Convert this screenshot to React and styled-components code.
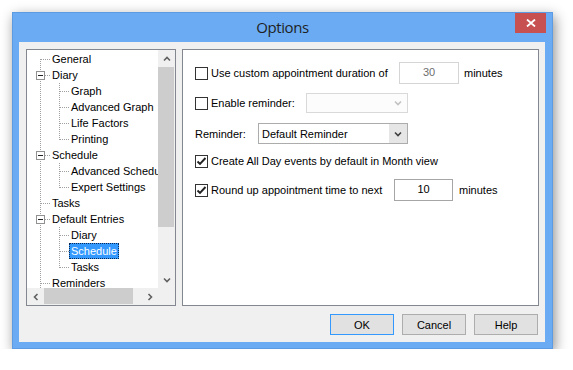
import styled, { createGlobalStyle } from "styled-components";

const GlobalStyle = createGlobalStyle`
  body {
    margin: 0;
    background: #ffffff;
    font-family: "Liberation Sans", Arial, sans-serif;
    font-size: 11px;
    color: #000;
  }
`;

const tree = [
  { label: "General", level: 0, first: true },
  { label: "Diary", level: 0, box: true },
  { label: "Graph", level: 1 },
  { label: "Advanced Graph", level: 1 },
  { label: "Life Factors", level: 1 },
  { label: "Printing", level: 1, last: true },
  { label: "Schedule", level: 0, box: true },
  { label: "Advanced Schedule", level: 1 },
  { label: "Expert Settings", level: 1, last: true },
  { label: "Tasks", level: 0 },
  { label: "Default Entries", level: 0, box: true },
  { label: "Diary", level: 1 },
  { label: "Schedule", level: 1, selected: true },
  { label: "Tasks", level: 1, last: true },
  { label: "Reminders", level: 0 },
];

function Connector({ item }) {
  const dot = { stroke: "#a0a0a0", strokeDasharray: "1 1", shapeRendering: "crispEdges" };
  if (item.level === 0) {
    return (
      <svg width="23" height="16">
        <line x1="13.5" y1={item.first ? 8 : 0} x2="13.5" y2="16" style={dot} />
        <line x1="14" y1="8.5" x2="23" y2="8.5" style={dot} />
        {item.box && (
          <>
            <rect x="9.5" y="4.5" width="8" height="8" fill="#fff" stroke="#919191" shapeRendering="crispEdges" />
            <line x1="11" y1="8.5" x2="16" y2="8.5" stroke="#222" shapeRendering="crispEdges" />
          </>
        )}
      </svg>
    );
  }
  return (
    <svg width="42" height="16">
      <line x1="13.5" y1="0" x2="13.5" y2="16" style={dot} />
      <line x1="32.5" y1="0" x2="32.5" y2={item.last ? 9 : 16} style={dot} />
      <line x1="33" y1="8.5" x2="42" y2="8.5" style={dot} />
    </svg>
  );
}

function Chevron({ dir = "down", color = "#404040" }) {
  const paths = {
    down: "M1 1.5 L4 4.5 L7 1.5",
    up: "M1 4.5 L4 1.5 L7 4.5",
    left: "M4.5 1 L1.5 4 L4.5 7",
    right: "M1.5 1 L4.5 4 L1.5 7",
  };
  const vertical = dir === "down" || dir === "up";
  return (
    <svg width={vertical ? 8 : 6} height={vertical ? 6 : 8}>
      <path d={paths[dir]} fill="none" stroke={color} strokeWidth="1.6" />
    </svg>
  );
}

function Check({ checked }) {
  return (
    <Box>
      {checked && (
        <svg width="11" height="11">
          <path d="M1.5 5.5 L4 8 L9.5 2" fill="none" stroke="#222" strokeWidth="1.9" />
        </svg>
      )}
    </Box>
  );
}

export default function App() {
  return (
    <>
      <GlobalStyle />
      <Window>
        <TitleBar>
          <span />
          <Title>Options</Title>
          <Close>
            <svg width="10" height="8">
              <path d="M1 0.5 L9 7.5 M9 0.5 L1 7.5" stroke="#fff" strokeWidth="1.8" />
            </svg>
          </Close>
        </TitleBar>
        <Client>
          <Panels>
            <TreePanel>
              <TreeBody>
                {tree.map((item, i) => (
                  <TreeRow key={i}>
                    <Connector item={item} />
                    <TreeLabel $selected={item.selected}>{item.label}</TreeLabel>
                  </TreeRow>
                ))}
              </TreeBody>
              <VScroll>
                <ArrowBox><Chevron dir="up" color="#606060" /></ArrowBox>
                <VThumb />
                <Track />
                <ArrowBox><Chevron dir="down" color="#606060" /></ArrowBox>
              </VScroll>
              <HScroll>
                <ArrowBox><Chevron dir="left" color="#606060" /></ArrowBox>
                <HThumb />
                <Track />
                <ArrowBox><Chevron dir="right" color="#606060" /></ArrowBox>
              </HScroll>
              <Corner />
            </TreePanel>

            <SettingsPanel>
              <Row $h={22}>
                <Check />
                <Label $w={188}>Use custom appointment duration of</Label>
                <NumberBox $w={60} $disabled>30</NumberBox>
                <Unit>minutes</Unit>
              </Row>
              <Row $h={20} $mt={9}>
                <Check />
                <Label $w={95}>Enable reminder:</Label>
                <Combo $w={102} $disabled>
                  <ComboText />
                  <ComboArrow $disabled><Chevron color="#c2c2c2" /></ComboArrow>
                </Combo>
              </Row>
              <Row $h={21} $mt={10}>
                <Label $w={63} $plain>Reminder:</Label>
                <Combo $w={150}>
                  <ComboText>Default Reminder</ComboText>
                  <ComboArrow><Chevron /></ComboArrow>
                </Combo>
              </Row>
              <Row $h={22} $mt={6}>
                <Check checked />
                <Label>Create All Day events by default in Month view</Label>
              </Row>
              <Row $h={22} $mt={7}>
                <Check checked />
                <Label $w={183}>Round up appointment time to next</Label>
                <NumberBox $w={59}>10</NumberBox>
                <Unit $gap={6}>minutes</Unit>
              </Row>
            </SettingsPanel>
          </Panels>

          <Buttons>
            <Button $default>OK</Button>
            <Button>Cancel</Button>
            <Button>Help</Button>
          </Buttons>
        </Client>
      </Window>
    </>
  );
}

const Window = styled.div`
  box-sizing: border-box;
  width: 541px;
  height: 337px;
  margin: 12px 0 0 12px;

  display: flex;
  flex-direction: column;

  background: #6aabf3;
  border: 1px solid #5c9be2;
  box-shadow: 2px 4px 12px rgba(0, 0, 0, 0.45);
  padding: 0 7px 6px 6px;
`;

const TitleBar = styled.div`
  height: 29px;
  display: grid;
  grid-template-columns: 1fr auto 1fr;
  margin: 0 -1px 0 0;
`;

const Title = styled.div`
  align-self: center;
  margin-top: -1px;
  font-family: "Open Sans", "Noto Sans", sans-serif;
  font-size: 15px;
  letter-spacing: -0.4px;
  color: #1f1f1f;
`;

const Close = styled.div`
  justify-self: end;
  align-self: start;
  width: 31px;
  height: 20px;
  background: #c75050;

  display: flex;
  align-items: center;
  justify-content: center;
`;

const Client = styled.div`
  box-sizing: border-box;
  width: 526px;
  height: 300px;
  background: #f0f0f0;
  padding: 7px 6px 7px 7px;

  display: flex;
  flex-direction: column;
`;

const Panels = styled.div`
  height: 257px;
  display: flex;
  gap: 6px;
`;

const TreePanel = styled.div`
  box-sizing: border-box;
  width: 150px;
  border: 1px solid #828790;
  background: #fff;

  display: grid;
  grid-template-columns: 1fr 17px;
  grid-template-rows: 1fr 17px;
  overflow: hidden;
`;

const TreeBody = styled.div`
  padding-top: 1px;
  overflow: hidden;
  white-space: nowrap;
`;

const TreeRow = styled.div`
  height: 16px;
  display: flex;
  align-items: center;

  svg {
    flex: none;
  }
`;

const TreeLabel = styled.span`
  box-sizing: border-box;
  height: 16px;
  line-height: 14px;
  padding: 0 1px;
  border: 1px ${(p) => (p.$selected ? "dotted #0b2b55" : "solid transparent")};
  background: ${(p) => (p.$selected ? "#3399ff" : "transparent")};
  color: ${(p) => (p.$selected ? "#fff" : "#000")};
`;

const VScroll = styled.div`
  background: #f0f0f0;
  display: flex;
  flex-direction: column;
`;

const HScroll = styled.div`
  background: #f0f0f0;
  display: flex;
`;

const ArrowBox = styled.div`
  flex: none;
  width: 17px;
  height: 17px;
  display: flex;
  align-items: center;
  justify-content: center;
`;

const VThumb = styled.div`
  height: 160px;
  margin-right: 1px;
  background: #cdcdcd;
`;

const HThumb = styled.div`
  width: 89px;
  margin-bottom: 1px;
  background: #cdcdcd;
`;

const Track = styled.div`
  flex: 1;
`;

const Corner = styled.div`
  background: #f0f0f0;
`;

const SettingsPanel = styled.div`
  box-sizing: border-box;
  flex: 1;
  border: 1px solid #828790;
  background: #fff;
  padding: 12px 12px 0 12px;

  display: flex;
  flex-direction: column;
`;

const Row = styled.div`
  height: ${(p) => p.$h}px;
  margin-top: ${(p) => p.$mt || 0}px;
  display: flex;
  align-items: center;
  white-space: nowrap;
`;

const Box = styled.div`
  box-sizing: border-box;
  flex: none;
  width: 13px;
  height: 13px;
  border: 1px solid #333;
  background: #fff;

  display: flex;
  align-items: center;
  justify-content: center;
`;

const Label = styled.span`
  flex: none;
  margin-left: ${(p) => (p.$plain ? 0 : 3)}px;
  width: ${(p) => (p.$w ? `${p.$w}px` : "auto")};
`;

const NumberBox = styled.div`
  box-sizing: border-box;
  flex: none;
  width: ${(p) => p.$w}px;
  height: 22px;
  border: 1px solid ${(p) => (p.$disabled ? "#d5d5d5" : "#a6a6a6")};
  background: #fff;
  color: ${(p) => (p.$disabled ? "#6d6d6d" : "#000")};

  display: flex;
  justify-content: center;
  padding-top: 3px;
`;

const Unit = styled.span`
  margin-left: ${(p) => p.$gap || 5}px;
`;

const Combo = styled.div`
  box-sizing: border-box;
  flex: none;
  width: ${(p) => p.$w}px;
  height: 100%;
  border: 1px solid ${(p) => (p.$disabled ? "#d9d9d9" : "#acacac")};
  background: ${(p) => (p.$disabled ? "#fcfcfc" : "#fff")};

  display: flex;
`;

const ComboText = styled.div`
  flex: 1;
  padding-left: 3px;
  display: flex;
  align-items: center;
`;

const ComboArrow = styled.div`
  width: 18px;
  background: ${(p) => (p.$disabled ? "transparent" : "#e6e6e6")};
  display: flex;
  align-items: center;
  justify-content: center;
`;

const Buttons = styled.div`
  margin-top: 8px;
  padding-right: 1px;
  display: flex;
  justify-content: flex-end;
  gap: 8px;
`;

const Button = styled.button`
  box-sizing: border-box;
  width: 64px;
  height: 21px;
  padding: 0;

  background: #e1e1e1;
  border: 1px solid ${(p) => (p.$default ? "#3399ff" : "#adadad")};
  border-radius: 0;

  font-family: "Liberation Sans", Arial, sans-serif;
  font-size: 11px;
  color: #000;
`;
